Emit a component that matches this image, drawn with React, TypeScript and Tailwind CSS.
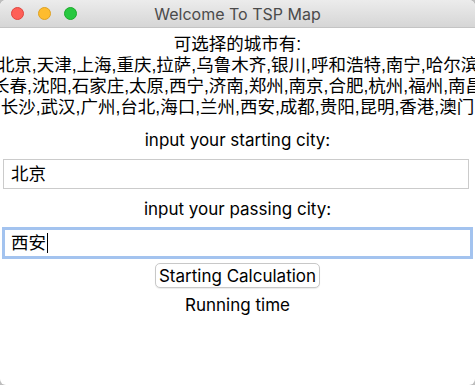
const cityLines = [
  "北京,天津,上海,重庆,拉萨,乌鲁木齐,银川,呼和浩特,南宁,哈尔滨",
  "长春,沈阳,石家庄,太原,西宁,济南,郑州,南京,合肥,杭州,福州,南昌",
  "长沙,武汉,广州,台北,海口,兰州,西安,成都,贵阳,昆明,香港,澳门",
]

const cjk = "font-['Liberation_Sans','Noto_Sans_CJK_SC',sans-serif]"
const latin = "font-['Inter','Noto_Sans_CJK_SC',sans-serif]"

export default function App() {
  return (
    <div className={`h-[385px] w-[475px] overflow-hidden bg-[#bdbdbd] ${latin}`}>
      <div className="flex h-full flex-col overflow-hidden rounded-[6px] bg-white">
        {/* title bar */}
        <div className="relative flex h-[28px] items-center justify-center border-b border-[#c4c4c4] bg-gradient-to-b from-[#ececec] to-[#d6d6d6]">
          <div className="absolute left-[11px] top-[7px] flex gap-[13.5px]">
            <span className="h-[13px] w-[13px] rounded-full border border-[#e0443e] bg-[#fe5f57]" />
            <span className="h-[13px] w-[13px] rounded-full border border-[#dea123] bg-[#febc2e]" />
            <span className="h-[13px] w-[13px] rounded-full border border-[#1aab29] bg-[#28c840]" />
          </div>
          <span className="text-[16px] text-[#4b4b4b]">Welcome To TSP Map</span>
        </div>

        {/* city list */}
        <div className={`mt-[6px] flex flex-col items-center text-[17.5px] leading-[21px] text-black ${cjk}`}>
          <div className="whitespace-nowrap">可选择的城市有:</div>
          {cityLines.map((line) => (
            <div key={line} className="flex w-full justify-center overflow-hidden whitespace-nowrap">
              <span className="shrink-0">{line}</span>
            </div>
          ))}
        </div>

        {/* inputs */}
        <div className="mt-[11px] flex flex-col items-center text-[17px] text-black">
          <div className="leading-[22px]">input your starting city:</div>
          <div className={`ml-[3px] mt-[8px] flex h-[30px] w-[466px] items-center self-start border border-[#cbcbcb] px-[7px] text-[17.5px] ${cjk}`}>
            北京
          </div>
          <div className="mt-[9px] leading-[22px]">input your passing city:</div>
          <div className={`ml-[2px] mt-[7px] flex h-[32px] w-[471px] items-center self-start border-[3px] border-[#a3c3ef] px-[6px] text-[17.5px] ${cjk}`}>
            西安
            <span className="ml-[1px] h-[20px] w-px bg-black" />
          </div>
          <button className="mt-[4px] h-[25px] rounded-[5px] border border-[#c8c8c8] bg-white px-[3px] leading-[22px] shadow-[0_1px_1px_rgba(0,0,0,0.08)]">
            Starting Calculation
          </button>
          <div className="mt-[6px] leading-[22px]">Running time</div>
        </div>
      </div>
    </div>
  )
}
